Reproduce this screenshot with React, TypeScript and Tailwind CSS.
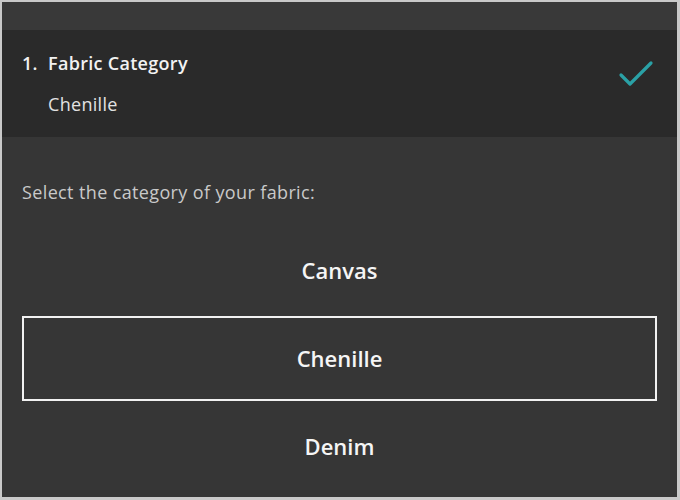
import React, { useState } from 'react';

const options = ['Canvas', 'Chenille', 'Denim'];

const Check: React.FC = () => (
    <svg width="36" height="28" viewBox="0 0 36 28" fill="none">
        <path d="M3 15 L12 24 L33 3" stroke="#2aa1a6" strokeWidth="3.2" strokeLinecap="round" strokeLinejoin="round" />
    </svg>
);

export default function App() {
    const [selected, setSelected] = useState('Chenille');

    return (
        <div className="w-[680px] h-[500px] bg-[#c9c9c9] pl-[2px] pt-[2px] pr-[3px] pb-[3px] font-['Open_Sans',sans-serif]">
            <div className="w-full h-full bg-[#363636] flex flex-col overflow-hidden">
                {/* top strip */}
                <div className="h-[28px] bg-[#393939] shrink-0" />

                {/* step header */}
                <div className="bg-[#2a2a2a] shrink-0 flex items-start justify-between pt-[21px] pb-[21px] pl-[20px] pr-[23px]">
                    <div className="flex flex-col gap-[17px]">
                        <div className="flex text-[18px] leading-[24px] font-semibold tracking-[0.3px] text-[#f2f2f2]">
                            <span className="w-[26px]">1.</span>
                            <span>Fabric Category</span>
                        </div>
                        <div className="pl-[26px] text-[18px] leading-[24px] tracking-[0.3px] text-[#e2e2e2]">{selected}</div>
                    </div>
                    <div className="pt-[9px]">
                        <Check />
                    </div>
                </div>

                {/* body */}
                <div className="flex flex-col px-[20px] pt-[43px]">
                    <p className="text-[18px] leading-[24px] tracking-[0.37px] text-[#c9c9c9]">Select the category of your fabric:</p>
                    <div className="mt-[24px] flex flex-col gap-[3px]">
                        {options.map(o => (
                            <button
                                key={o}
                                onClick={() => setSelected(o)}
                                className={`h-[85px] flex items-center justify-center text-[22px] font-semibold text-[#f5f5f5] border-2 ${
                                    selected === o ? 'border-[#f2f2f2]' : 'border-transparent'
                                }`}
                            >
                                {o}
                            </button>
                        ))}
                    </div>
                </div>
            </div>
        </div>
    );
}
